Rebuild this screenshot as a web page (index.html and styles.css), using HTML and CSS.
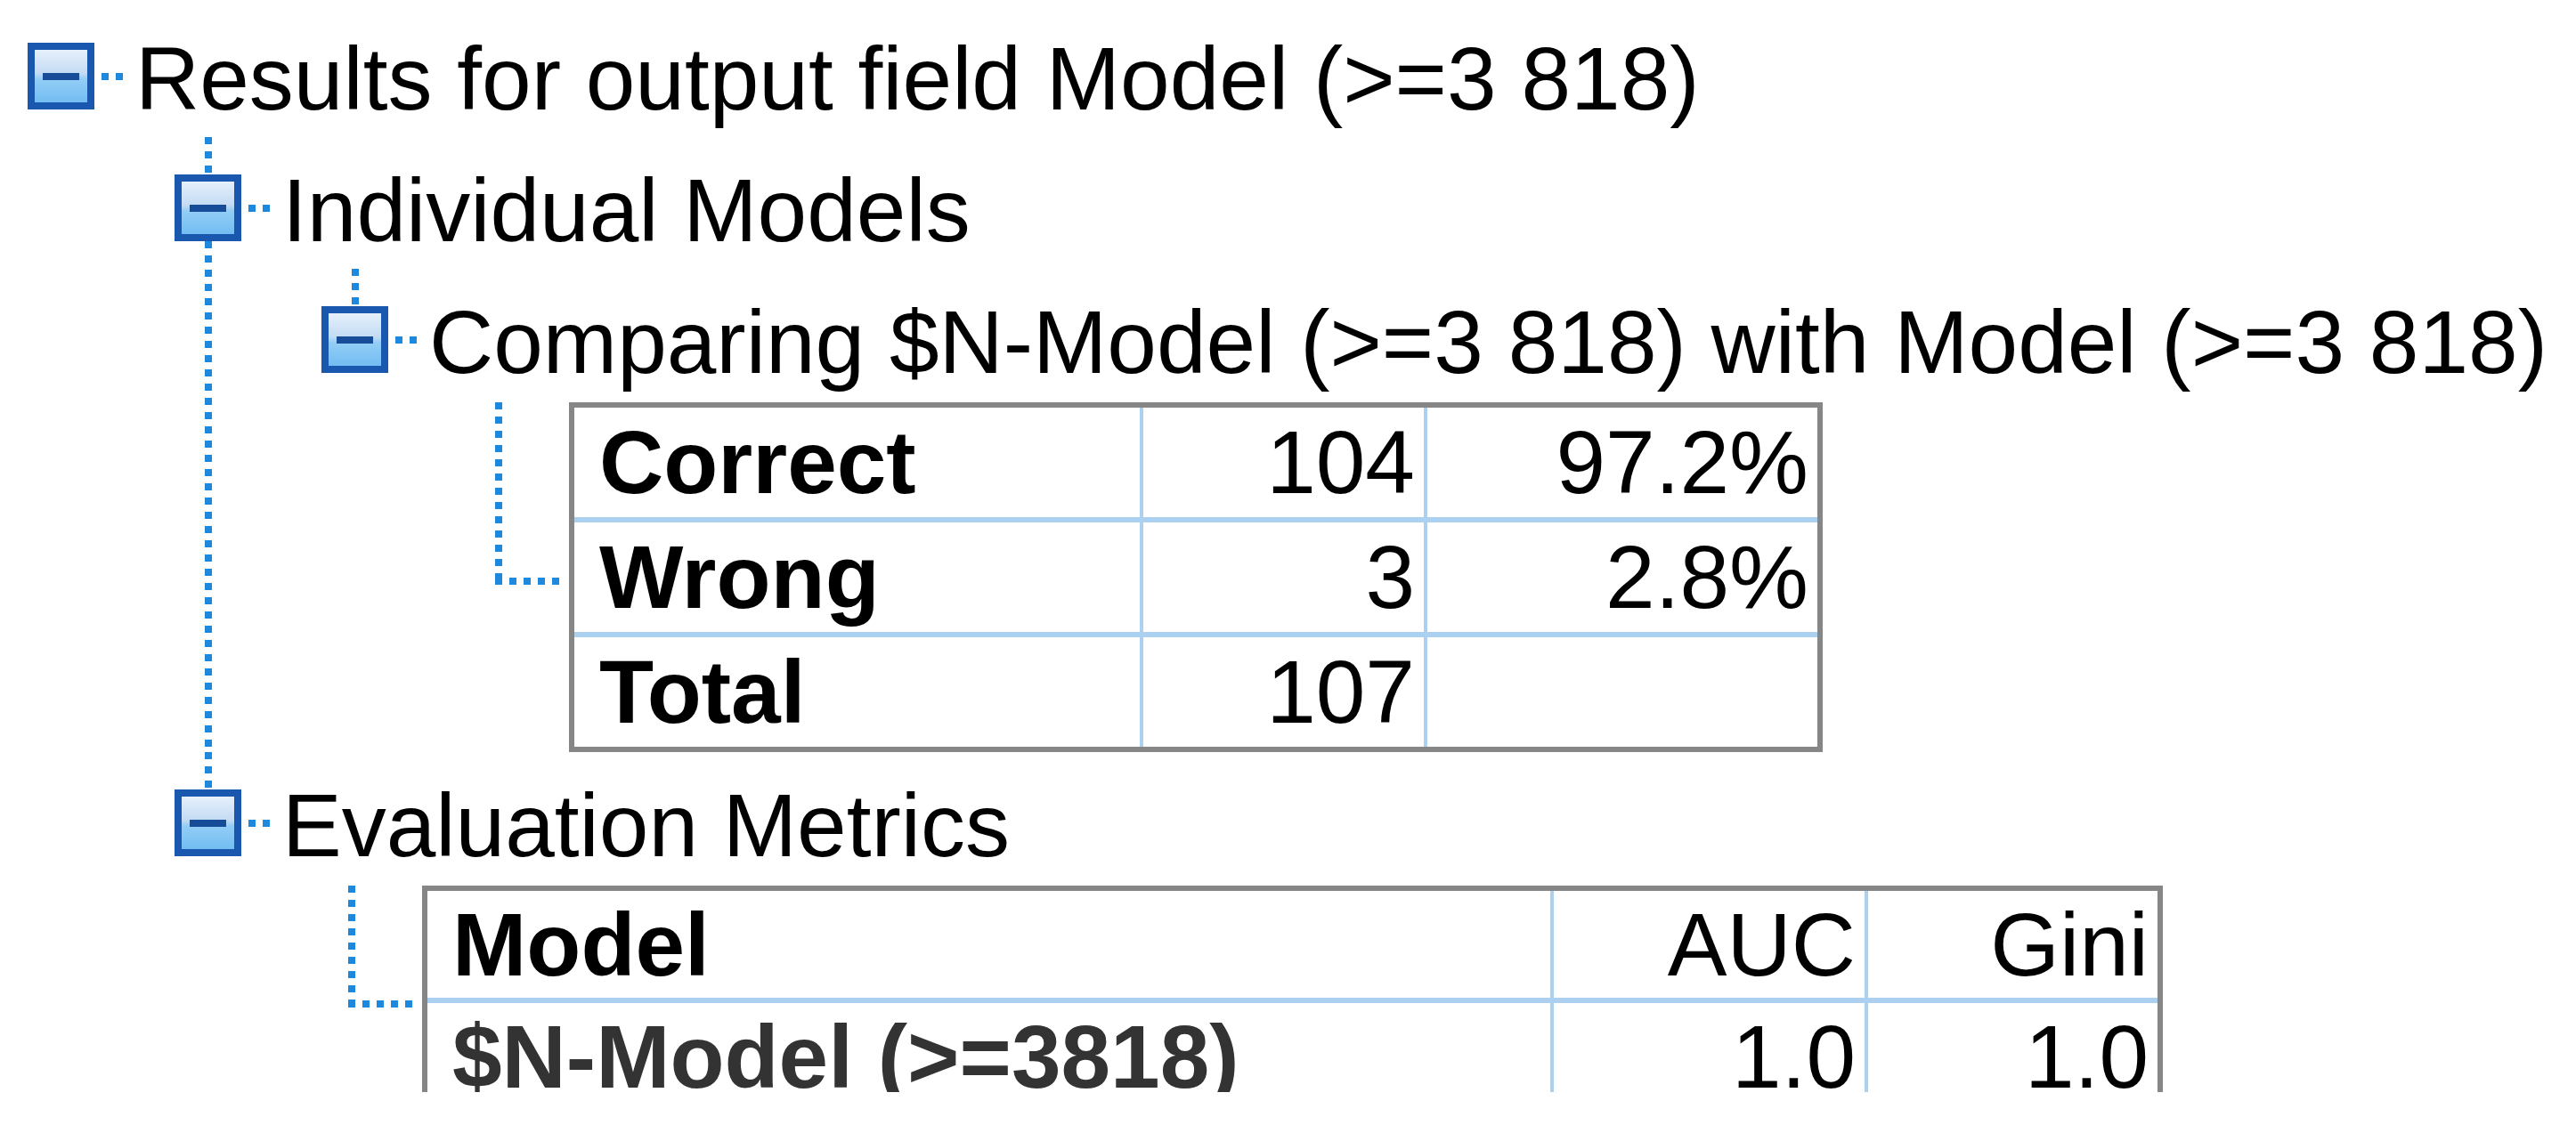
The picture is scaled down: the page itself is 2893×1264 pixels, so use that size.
FILE: index.html
```html
<!DOCTYPE html>
<html lang="en">
<head>
    <meta charset="UTF-8">
    <title>Results for output field Model</title>
    <link rel="stylesheet" href="styles.css">
</head>
<body>

<div class="frame">
    <div class="node root">
        <div class="row"><span class="toggle"></span><span class="label">Results for output field Model (&gt;=3 818)</span></div>
        <div class="children">

            <div class="node has-next">
                <div class="row"><span class="toggle"></span><span class="label">Individual Models</span></div>
                <div class="children">
                    <div class="node">
                        <div class="row"><span class="toggle"></span><span class="label">Comparing $N-Model (&gt;=3 818) with Model (&gt;=3 818)</span></div>
                        <div class="children">
                            <div class="leaf">
                                <div class="grid grid-compare">
                                    <div class="cell head">Correct</div>
                                    <div class="cell num">104</div>
                                    <div class="cell num">97.2%</div>
                                    <div class="cell head">Wrong</div>
                                    <div class="cell num">3</div>
                                    <div class="cell num">2.8%</div>
                                    <div class="cell head">Total</div>
                                    <div class="cell num">107</div>
                                    <div class="cell num"></div>
                                </div>
                            </div>
                        </div>
                    </div>
                </div>
            </div>

            <div class="node after-table">
                <div class="row"><span class="toggle"></span><span class="label">Evaluation Metrics</span></div>
                <div class="children">
                    <div class="leaf">
                        <div class="grid grid-metrics">
                            <div class="cell head">Model</div>
                            <div class="cell num">AUC</div>
                            <div class="cell num">Gini</div>
                            <div class="cell head dim">$N-Model (&gt;=3818)</div>
                            <div class="cell num">1.0</div>
                            <div class="cell num">1.0</div>
                        </div>
                    </div>
                </div>
            </div>

        </div>
    </div>
</div>

</body>
</html>
```

FILE: styles.css
```css
body {
    margin: 0;
    background: #fff;
    color: #000;
    font-family: "Liberation Sans", Arial, Helvetica, sans-serif;
}

/* screenshot is cut off just below the second table row */
.frame {
    box-sizing: border-box;
    height: 1227px;
    overflow: hidden;
    padding: 31px 0 0 31px;
}

.node {
    position: relative;
}

.children {
    padding-left: 165px;
}

.children > .node {
    margin-top: 33px;
}

.children > .node.after-table {
    margin-top: 25px;
}

/* dotted tree lines */
.children > .node::before,
.children > .node.has-next::after,
.leaf::before {
    content: "";
    position: absolute;
    width: 8px;
    background: repeating-linear-gradient(to bottom, #1e88dd 0 8px, transparent 8px 16px);
}

.children > .node::before {
    left: 34px;
    top: -25px;
    height: 42px;
}

.children > .node.has-next::after {
    left: 34px;
    top: 92px;
    bottom: 0;
}

.row {
    display: flex;
    align-items: flex-start;
    height: 115px;
    font-size: 100px;
    line-height: 115px;
    white-space: nowrap;
}

/* collapse box */
.toggle {
    position: relative;
    flex: none;
    box-sizing: border-box;
    width: 75px;
    height: 75px;
    margin-top: 17px;
    margin-right: 46px;
    border: 8px solid #1a58b0;
    background: linear-gradient(#e6f0fb 0%, #c3dbf3 45%, #93cdf6 56%, #72bdf2 100%);
}

.toggle::before {
    content: "";
    position: absolute;
    left: 9px;
    top: 26px;
    width: 41px;
    height: 8px;
    background: #174c98;
}

.toggle::after {
    content: "";
    position: absolute;
    left: 75px;
    top: 26px;
    width: 24px;
    height: 8px;
    background: repeating-linear-gradient(to right, #1e88dd 0 8px, transparent 8px 16px);
}

/* table hanging off a node */
.leaf {
    position: relative;
    display: flex;
    margin-top: 10px;
    margin-left: 113px;
}

.leaf::before {
    left: -83px;
    top: 0;
    height: calc(50% + 4px);
}

.leaf::after {
    content: "";
    position: absolute;
    left: -83px;
    top: 50%;
    width: 74px;
    height: 8px;
    background: repeating-linear-gradient(to right, #1e88dd 0 8px, transparent 8px 16px);
}

.grid {
    display: grid;
    border: 6px solid #868686;
    background: #acd0f0;
    column-gap: 4px;
    row-gap: 6px;
    font-size: 100px;
}

.grid-compare {
    grid-template-columns: 635px 315px 438px;
    grid-auto-rows: 123px;
    line-height: 123px;
}

.grid-metrics {
    grid-template-columns: 1261px 349px 325px;
    grid-auto-rows: 120px;
    line-height: 120px;
}

.cell {
    background: #fff;
    padding: 0 10px 0 28px;
    white-space: nowrap;
    overflow: hidden;
}

.cell.head {
    font-weight: bold;
}

.cell.num {
    text-align: right;
}

.cell.dim {
    color: #333;
}
```
